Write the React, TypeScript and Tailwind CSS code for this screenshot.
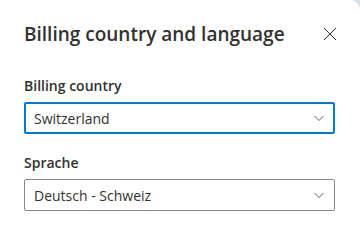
import React from 'react';

const Chevron = () => (
  <svg width="12" height="12" viewBox="0 0 12 12" className="text-[#605e5c]">
    <path d="M1.5 4 L6 8.5 L10.5 4" fill="none" stroke="currentColor" strokeWidth="1" />
  </svg>
);

const Field = ({ label, value, focused }: { label: string; value: string; focused?: boolean }) => (
  <div className="flex flex-col">
    <label className="text-[14px] font-semibold text-[#323130] leading-[20px] mb-[6px]">{label}</label>
    <div
      className={`h-[32px] flex items-center justify-between rounded-[2px] bg-white ${
        focused ? 'border-2 border-[#0078d4] pl-[8px] pr-[8px]' : 'border border-[#8a8886] pl-[9px] pr-[9px]'
      }`}
    >
      <span className="text-[14px] text-[#323130]">{value}</span>
      <Chevron />
    </div>
  </div>
);

export default function App() {
  return (
    <div className="w-[360px] h-[229px] bg-[#d3e1e4] overflow-hidden" style={{ fontFamily: '"Open Sans", "Noto Sans", sans-serif' }}>
      <div className="h-full bg-white rounded-tr-[10px]">
        <div className="flex items-center justify-between pl-[24px] pr-[22px] pt-[21px]">
          <h1 className="text-[19px] font-semibold text-[#323130] leading-[26px]">Billing country and language</h1>
          <button className="w-[16px] h-[16px] flex items-center justify-center text-[#323130]">
            <svg width="14" height="14" viewBox="0 0 14 14">
              <path d="M1 1 L13 13 M13 1 L1 13" stroke="currentColor" strokeWidth="1" />
            </svg>
          </button>
        </div>
        <div className="pl-[24px] pr-[25px] pt-[29px] flex flex-col gap-[19px]">
          <Field label="Billing country" value="Switzerland" focused />
          <Field label="Sprache" value="Deutsch - Schweiz" />
        </div>
      </div>
    </div>
  );
}
